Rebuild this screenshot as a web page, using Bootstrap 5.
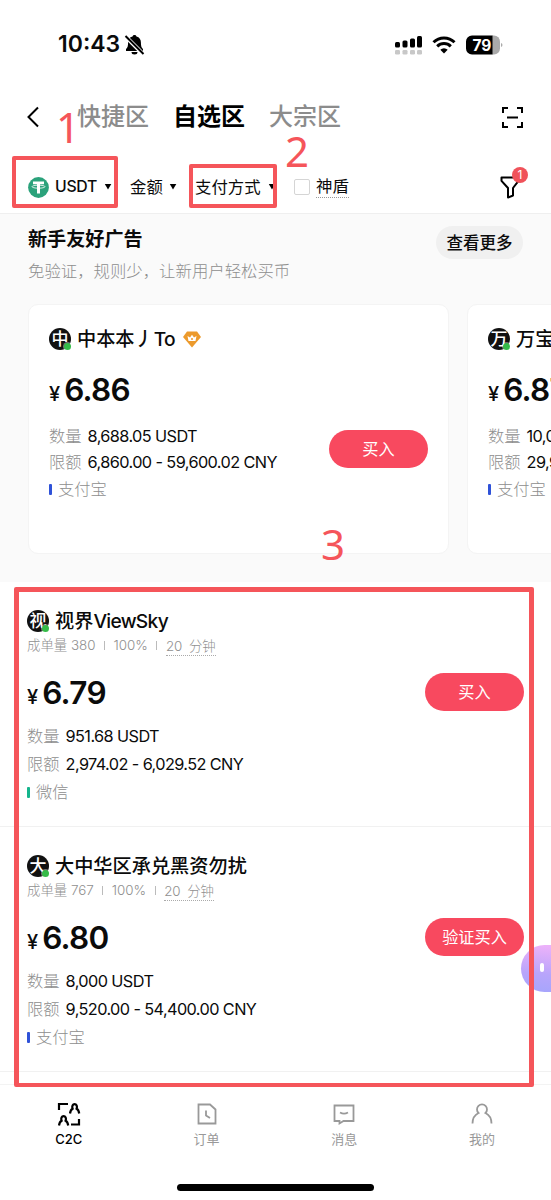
<!DOCTYPE html>
<html lang="zh-CN">
<head>
<meta charset="utf-8">
<meta name="viewport" content="width=device-width, initial-scale=1">
<title>C2C</title>
<link rel="stylesheet" href="https://cdn.jsdelivr.net/npm/bootstrap@5.3.0/dist/css/bootstrap.min.css">
<style>
  body{font-family:Inter,"Noto Sans CJK SC",sans-serif;color:#0b0b0b;background:#fff;font-size:16px;line-height:1.5}
  .screen{width:551px;height:1200px;background:#fff}
  .screen svg{display:block;flex:none}
  .status{height:80px;padding:9px 48px 0 58px}
  .clock{font-size:23px;font-weight:600;letter-spacing:0}
  .zones{height:80px;padding:0 27px 6px 27px;font-size:24px;line-height:36px;color:#8c8c8c;font-weight:500}
  .zones .on{color:#000;font-weight:700}
  .filters{height:54px;padding:1px 0 0 28px;border-bottom:1px solid #efefef;font-size:16.4px;font-weight:400}
  .filters span{white-space:nowrap}
  .dotted{border-bottom:1.5px dotted #999}
  .tick{width:16px;height:16px;border:1px solid #d5d5d5;border-radius:2px}
  .count{left:12px;top:-9px;width:16px;height:16px;font-size:12px;line-height:16px;background:#f0525a;color:#fff}
  .starter{height:368px;background:#fafafa;padding:11px 0 0 28px}
  .starter h2{font-size:19.1px;line-height:28px;font-weight:700;margin:0}
  .sub{font-size:16.4px;line-height:26px;margin-top:5px;color:#8e8e8e;font-weight:300}
  .more{width:87px;height:33px;margin:1px 28px 0 0;background:#f0f0f0;font-size:16.5px;line-height:34px;font-weight:500}
  .deal{flex:none;width:421px;height:250px;border:1px solid #f4f4f4;border-radius:10px;background:#fff;padding:22px 20px 0}
  .deals{margin-top:20px;gap:18px}
  .offer{height:245px;padding:27px 27px 0;border-bottom:1px solid #f1f1f1}
  .who{height:24px;font-size:19.2px;font-weight:500;line-height:24px;white-space:nowrap}
  .latin{letter-spacing:-.7px}
  .face{width:22px;height:22px;background:#111;color:#fff;font-size:17px;line-height:22px;text-align:center;margin-right:6px;flex:none;font-weight:500}
  .face i{right:0;bottom:0;width:7px;height:7px;background:#35bb48;border-radius:50%;box-shadow:0 0 0 1px #fff6}
  .stats{height:25px;font-size:13.4px;line-height:25px;color:#909090;font-weight:300;gap:8.5px}
  .stats b{width:1px;height:9px;background:#bbb}
  .stats u{text-decoration:none;border-bottom:1.5px dotted #aaa;line-height:17px;word-spacing:-.5px;margin-top:2px}
  .cost{font-size:31.5px;font-weight:600;white-space:nowrap;line-height:40px;letter-spacing:-.7px}
  .cost small{font-size:20px;font-weight:500;margin-right:4px;letter-spacing:0}
  .offer .cost{padding-top:15px;height:64px}
  .deal .cost{padding-top:19px;height:72px}
  .fact{height:28px;line-height:28px;white-space:nowrap;letter-spacing:-.6px;font-size:16.3px}
  .deal .fact{height:26px;line-height:26px}
  .deal .fact:last-child{margin-top:1px}
  .fact span{color:#8e8e8e;font-weight:300;margin-right:6px;letter-spacing:0}
  .fact s{width:3px;height:11px;background:#2f52d8;border-radius:1px;margin-right:6px}
  .fact s.wx{background:#15b58c}
  .buy{width:99px;height:38px;flex:none;background:#f8495f;color:#fff;font-size:16.2px;line-height:38px;padding:0;border:0;margin-top:64px}
  .deal .buy{margin-top:103px}
  .foot{height:115px;border-top:1px solid #f3f3f3;color:#999;font-size:13px;line-height:20px}
  .foot .tab{width:25%;padding-top:17px;gap:3px}
  .foot .on{color:#000;font-weight:500}
  .home{left:177px;top:1184px;width:197px;height:7px;background:#000}
  .frame{border:4px solid #f5555a;border-radius:2px;pointer-events:none}
  .f1{left:12px;top:156px;width:106px;height:52px}
  .f2{left:189px;top:164px;width:88px;height:44px}
  .f3{left:14px;top:587px;width:520px;height:500px;border-width:5px 5px 4px}
  .step{font:400 42px/40px "Noto Sans",sans-serif;color:#f5555a}
  .helper{left:521px;top:945px;width:30px;height:47px;border-radius:24px 0 0 24px;background:linear-gradient(185deg,#eeb2fa,#b8a5fb 60%,#a5a5fc)}
  .helper i{left:19px;top:18px;width:4px;height:9px;border-radius:2px;background:#fff}
</style>
</head>
<body>
<div class="screen position-relative overflow-hidden">
  <header class="status d-flex align-items-center">
    <span class="clock">10:43</span>
    <svg style="margin-left:4px" width="21" height="21" viewBox="0 0 21 21"><path d="M10.500 1a2 2 0 0 1 2 1.400c3 .8 4.400 3 4.400 5.800 0 4 .6 5.600 2.100 6.800V17H2v-2c1.500-1.200 2.100-2.800 2.100-6.800 0-2.800 1.400-5 4.400-5.800a2 2 0 0 1 2-1.400zM7.500 18h6a3 2.500 0 0 1-6 0z"/><path d="M1 2 19.500 20.500" stroke="#fff" stroke-width="4"/><path d="M1.500 2 19.500 20" stroke="#000" stroke-width="1.900"/></svg>
    <svg class="ms-auto" width="28" height="20" viewBox="0 0 28 20"><g fill="#000"><rect x="0" y="7" width="5" height="5.500" rx="1.500"/><rect x="7.500" y="5.500" width="5" height="7" rx="1.500"/><rect x="15" y="3.500" width="5" height="9" rx="1.500"/><rect x="22" y="1" width="5" height="11.500" rx="1.500"/></g><g fill="#c8c8c8"><rect x="0" y="15" width="5" height="4.500" rx="1.200"/><rect x="7.500" y="15" width="5" height="4.500" rx="1.200"/><rect x="15" y="15" width="5" height="4.500" rx="1.200"/><rect x="22" y="15" width="5" height="4.500" rx="1.200"/></g></svg>
    <svg style="margin-left:9px" width="24" height="18" viewBox="0 0 24 18"><g fill="none" stroke="#000" stroke-width="3"><path d="M1.500 6.300a15 15 0 0 1 21 0"/><path d="M5.200 10.400a9.700 9.700 0 0 1 13.600 0"/></g><path d="M12 17.500 8.300 13.700a5.300 5.300 0 0 1 7.400 0z"/></svg>
    <svg style="margin-left:9px" width="38" height="20" viewBox="0 0 38 20"><path d="M27 .5h2a6 6 0 0 1 6 6v7a6 6 0 0 1-6 6h-2z" fill="#aaa"/><path d="M7 .5h20.500v19H7a6 6 0 0 1-6-6v-7a6 6 0 0 1 6-6z"/><path d="M36 8c2 .7 2 3.300 0 4z" fill="#aaa"/><text x="7.500" y="15.500" font-size="15.500" font-weight="700" fill="#fff" font-family="Inter,sans-serif">79</text></svg>
  </header>

  <nav class="zones d-flex align-items-center">
    <svg width="12" height="22" viewBox="0 0 12 22"><path d="M11 1.500 1.500 11l9.500 9.500" fill="none" stroke="#000" stroke-width="2"/></svg>
    <span style="margin-left:38px">快捷区</span><span class="on" style="margin-left:24px">自选区</span><span style="margin-left:24px">大宗区</span>
    <svg class="ms-auto" width="23" height="23" viewBox="0 0 23 23"><path d="M2 7V2h5M16 2h5v5M21 16v5h-5M7 21H2v-5M6 11.500h11" fill="none" stroke="#000" stroke-width="2"/></svg>
  </nav>

  <div class="filters d-flex align-items-center">
    <svg width="21" height="21" viewBox="0 0 21 21"><circle cx="10.500" cy="10.500" r="10.400" fill="#2ba27b"/><path d="M5 4.500h11v2.700h-4V9h-3V7.200H5zM9 9h3v7.500H9z" fill="#fff"/><ellipse cx="10.500" cy="9.700" rx="6.500" ry="1.500" fill="none" stroke="#fff" stroke-width=".8"/></svg>
    <span class="fw-medium" style="margin-left:6px;width:41px;margin-right:8px;font-size:15.800px;letter-spacing:-.3px;font-weight:500">USDT</span>
    <svg width="8" height="6"><path d="M.8 0h6.500L4 5.500z"/></svg>
    <span style="margin-left:18px;width:33px;margin-right:6px">金额</span>
    <svg width="8" height="6"><path d="M.8 0h6.500L4 5.500z"/></svg>
    <span style="margin-left:18px;width:66px;margin-right:7px">支付方式</span>
    <svg width="8" height="6"><path d="M.8 0h6.500L4 5.500z"/></svg>
    <div class="tick" style="margin-left:18px;margin-right:6px"></div>
    <span class="dotted" style="line-height:21px">神盾</span>
    <div class="position-relative ms-auto" style="margin-right:31px"><svg width="20" height="23" viewBox="0 0 20 23"><path d="M1.500 1.500h17v3.300L13 12v7.500L8 21.500V12L1.500 4.800z" fill="none" stroke="#000" stroke-width="2" stroke-linejoin="round"/></svg><span class="count position-absolute rounded-circle text-center fw-normal">1</span></div>
  </div>

  <section class="starter">
    <div class="d-flex justify-content-between"><div><h2>新手友好广告</h2><p class="sub mb-0">免验证，规则少，让新用户轻松买币</p></div><span class="more rounded-pill text-center">查看更多</span></div>
    <div class="deals d-flex">
      <article class="deal d-flex justify-content-between">
        <div>
          <div class="who d-flex align-items-center"><span class="face rounded-circle position-relative">中<i class="position-absolute"></i></span>中本本丿<span class="latin">To</span><svg style="margin-left:8px" width="18" height="17" viewBox="0 0 18 17"><path d="M4 .5h10L18 6l-9 10.500L0 6z" fill="#ec9a2c"/><path d="M4.500 5 7 6.500 9 3.700l2 2.800L13.500 5l-1 5h-7z" fill="#fff"/><circle cx="9" cy="8" r="1" fill="#ec9a2c"/></svg></div>
          <div class="cost"><small>¥</small>6.86</div>
          <div class="fact"><span>数量</span>8,688.05 USDT</div>
          <div class="fact"><span>限额</span>6,860.00 - 59,600.02 CNY</div>
          <div class="fact d-flex align-items-center"><s></s><span>支付宝</span></div>
        </div>
        <button class="buy btn rounded-pill">买入</button>
      </article>
      <article class="deal">
        <div class="who d-flex align-items-center"><span class="face rounded-circle position-relative">万<i class="position-absolute"></i></span>万宝</div>
        <div class="cost"><small>¥</small>6.87</div>
        <div class="fact"><span>数量</span>10,0</div>
        <div class="fact"><span>限额</span>29,9</div>
        <div class="fact d-flex align-items-center"><s></s><span>支付宝</span></div>
      </article>
    </div>
  </section>

  <main>
    <article class="offer d-flex justify-content-between">
      <div>
        <div class="who d-flex align-items-center"><span class="face rounded-circle position-relative">视<i class="position-absolute"></i></span>视界<span class="latin">ViewSky</span></div>
        <div class="stats d-flex align-items-center"><span>成单量 380</span><b></b><span>100%</span><b></b><u>20&nbsp; 分钟</u></div>
        <div class="cost"><small>¥</small>6.79</div>
        <div class="fact"><span>数量</span>951.68 USDT</div>
        <div class="fact"><span>限额</span>2,974.02 - 6,029.52 CNY</div>
        <div class="fact d-flex align-items-center"><s class="wx"></s><span>微信</span></div>
      </div>
      <button class="buy btn rounded-pill">买入</button>
    </article>
    <article class="offer d-flex justify-content-between">
      <div>
        <div class="who d-flex align-items-center"><span class="face rounded-circle position-relative">大<i class="position-absolute"></i></span>大中华区承兑黑资勿扰</div>
        <div class="stats d-flex align-items-center"><span>成单量 767</span><b></b><span>100%</span><b></b><u>20&nbsp; 分钟</u></div>
        <div class="cost"><small>¥</small>6.80</div>
        <div class="fact"><span>数量</span>8,000 USDT</div>
        <div class="fact"><span>限额</span>9,520.00 - 54,400.00 CNY</div>
        <div class="fact d-flex align-items-center"><s></s><span>支付宝</span></div>
      </div>
      <button class="buy btn rounded-pill">验证买入</button>
    </article>
  </main>

  <footer class="foot d-flex" style="margin-top:12px">
    <div class="tab on d-flex flex-column align-items-center"><svg width="24" height="24" viewBox="0 0 24 24" fill="none" stroke="#000" stroke-width="2.200"><path d="M2 8V2h9M13 11.500c.3-2.500 1-4 2.600-4.800-1-2.500.2-4.500 2-4.500s3 2 2 4.500c1.600.8 2.300 2.300 2.600 4.800M2 23.500c.3-2.500 1-4 2.600-4.800-1-2.500.2-4.500 2-4.500s3 2 2 4.500c1.600.8 2.300 2.300 2.600 4.800M22 17v5.500h-8"/></svg>C2C</div>
    <div class="tab d-flex flex-column align-items-center"><svg width="24" height="24" viewBox="0 0 24 24" fill="none" stroke="#999" stroke-width="1.800"><path d="M3.500 2.500h11.500l5.500 5v14H3.500zM11 8.500v5l4 2.500"/></svg>订单</div>
    <div class="tab d-flex flex-column align-items-center"><svg width="24" height="24" viewBox="0 0 24 24" fill="none" stroke="#999" stroke-width="1.800"><path d="M2.500 3.500h19v15.500h-10L7.500 21.500V19h-5zM8 10.500q4 2.200 8 0"/></svg>消息</div>
    <div class="tab d-flex flex-column align-items-center"><svg width="24" height="24" viewBox="0 0 24 24" fill="none" stroke="#999" stroke-width="1.800"><path d="M2.500 21.500c0-5.500 2-8.500 6-10.500a5 5 0 1 1 7 0c4 2 6 5 6 10.500"/></svg>我的</div>
  </footer>

  <div class="home position-absolute rounded-pill"></div>
  <div class="helper position-absolute"><i class="position-absolute"></i></div>
  <div class="frame f1 position-absolute"></div>
  <div class="frame f2 position-absolute"></div>
  <div class="frame f3 position-absolute"></div>
  <span class="step position-absolute" style="left:56px;top:107px">1</span>
  <span class="step position-absolute" style="left:285px;top:131px">2</span>
  <span class="step position-absolute" style="left:321px;top:524px">3</span>
</div>
<script src="https://cdn.jsdelivr.net/npm/bootstrap@5.3.0/dist/js/bootstrap.bundle.min.js"></script>
</body>
</html>
